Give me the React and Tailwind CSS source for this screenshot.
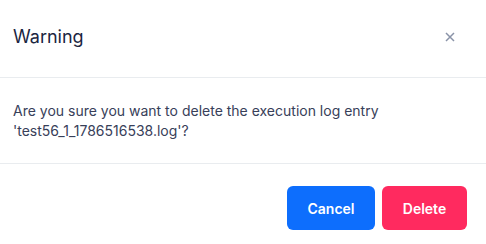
export default function App() {
  return (
    <div className="w-[486px] h-[244px] bg-white font-['Inter',sans-serif] flex flex-col">
      <div className="h-[78px] flex items-center justify-between pl-[13px] pr-[31px] pb-[3px] border-b border-[#e9ecef]">
        <h2 className="text-[18px] text-[#1b2541] leading-7">Warning</h2>
        <button className="text-[#8a93a8]">
          <svg width="10" height="10" viewBox="0 0 10 10" fill="none">
            <path d="M1 1L9 9M9 1L1 9" stroke="currentColor" strokeWidth="1.5" />
          </svg>
        </button>
      </div>
      <div className="h-[86px] flex items-center px-[13px] border-b border-[#e9ecef]">
        <p className="text-[14px] leading-[20px] text-[#384059]">
          Are you sure you want to delete the execution log entry
          <br />
          'test56_1_1786516538.log'?
        </p>
      </div>
      <div className="flex justify-end gap-[7px] pt-[22px] pr-[19px]">
        <button className="w-[88px] h-[44px] rounded-[6px] bg-[#0d6efd] text-white text-[14px] font-semibold">
          Cancel
        </button>
        <button className="w-[85px] h-[44px] rounded-[6px] bg-[#ff2a5f] text-white text-[14px] font-semibold">
          Delete
        </button>
      </div>
    </div>
  );
}
